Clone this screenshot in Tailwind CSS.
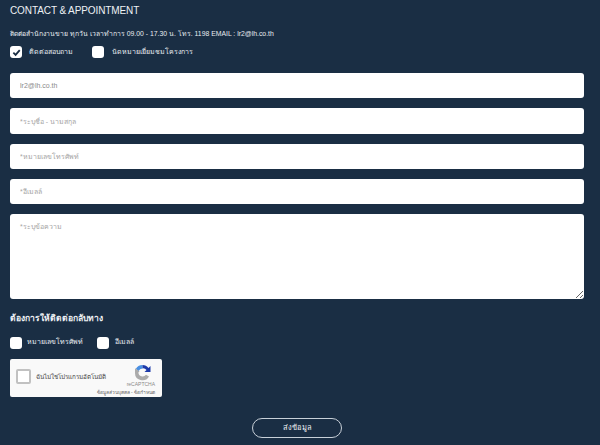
<!DOCTYPE html>
<html lang="th">
<head>
    <meta charset="UTF-8">
    <meta name="viewport" content="width=device-width, initial-scale=1.0">
    <title>Contact &amp; Appointment</title>
    <script src="https://cdn.jsdelivr.net/npm/@tailwindcss/browser@4"></script>
</head>
<body class="bg-[#1a2e44] text-white h-[445px] overflow-hidden font-['Liberation_Sans','Noto_Sans',sans-serif]">
    <form class="w-[574px] ml-[10px] flex flex-col">
        <h1 class="mt-[3px] h-[15px] leading-[15px] text-[10px] tracking-[-0.1px] text-[#eef1f4]">CONTACT &amp; APPOINTMENT</h1>

        <p class="mt-[10px] h-[12px] leading-[12px] text-[6.85px] text-[#e8ecf0]">ติดต่อสำนักงานขาย ทุกวัน เวลาทำการ 09.00 - 17.30 น. โทร. 1198 EMAIL : lr2@lh.co.th</p>

        <!-- ประเภทการติดต่อ -->
        <div class="mt-[6px] flex items-center h-[12px] text-[7px] text-[#e8ecf0]">
            <span class="w-[12px] h-[12px] bg-white rounded-[3px] flex items-center justify-center">
                <svg class="w-[9px] h-[9px]" viewBox="0 0 10 10" fill="none" stroke="#1a2e44" stroke-width="2"><path d="M1.5 5.2 L4 7.6 L8.6 2.4"/></svg>
            </span>
            <span class="ml-[7px]">ติดต่อสอบถาม</span>
            <span class="ml-[19px] w-[12px] h-[12px] bg-white rounded-[3px]"></span>
            <span class="ml-[8px]">นัดหมายเยี่ยมชมโครงการ</span>
        </div>

        <div class="mt-[15px] flex flex-col gap-[10px]">
            <input type="text" value="lr2@lh.co.th" class="w-full h-[25px] px-[10px] bg-white rounded-[3px] text-[7px] text-[#8a8a8a] outline-none">
            <input type="text" placeholder="*ระบุชื่อ - นามสกุล" class="w-full h-[26px] px-[10px] bg-white rounded-[3px] text-[7px] placeholder:text-[#a5a5a5] outline-none">
            <input type="text" placeholder="*หมายเลขโทรศัพท์" class="w-full h-[25px] px-[10px] bg-white rounded-[3px] text-[7px] placeholder:text-[#a5a5a5] outline-none">
            <input type="text" placeholder="*อีเมลล์" class="w-full h-[25px] px-[10px] bg-white rounded-[3px] text-[7px] placeholder:text-[#a5a5a5] outline-none">
            <textarea placeholder="*ระบุข้อความ" class="block w-full h-[85px] px-[10px] py-[8px] bg-white rounded-[3px] text-[7px] placeholder:text-[#a5a5a5] outline-none"></textarea>
        </div>

        <h2 class="mt-[12px] h-[14px] leading-[14px] text-[8.5px] font-bold text-[#eef1f4]">ต้องการให้ติดต่อกลับทาง</h2>

        <!-- ช่องทางติดต่อกลับ -->
        <div class="mt-[11px] flex items-center h-[13px] text-[7px] text-[#e8ecf0]">
            <span class="w-[12px] h-[12px] bg-white rounded-[3px]"></span>
            <span class="ml-[5px]">หมายเลขโทรศัพท์</span>
            <span class="ml-[14px] w-[12px] h-[12px] bg-white rounded-[3px]"></span>
            <span class="ml-[6px]">อีเมลล์</span>
        </div>

        <!-- reCAPTCHA -->
        <div class="mt-[10px] w-[152px] h-[38px] bg-[#f9f9f9] rounded-[2px] flex relative text-[#444]">
            <span class="ml-[6px] mt-[10px] w-[15px] h-[15px] bg-white border-2 border-[#c1c1c1] rounded-[2px]"></span>
            <span class="ml-[5px] mt-[13px] h-[10px] leading-[10px] text-[6.3px] font-medium">ฉันไม่ใช่โปรแกรมอัตโนมัติ</span>
            <svg class="absolute left-[124px] top-[5px] w-[17px] h-[17px]" viewBox="0 0 17 17" fill="none">
                <path d="M8.5 1 A7.5 7.5 0 0 0 1.8 5 L4.6 7 A4.2 4.2 0 0 1 8.5 4.4 Z" fill="#4a90e2"/>
                <path d="M8.5 1 A7.5 7.5 0 0 1 14.5 4 L16.5 2 V8 H10.5 L12.5 6 A4.2 4.2 0 0 0 8.5 4.4 Z" fill="#1c3aa9"/>
                <path d="M1 8.5 A7.5 7.5 0 0 0 15 12.5 L12 10.8 A4.2 4.2 0 0 1 4.4 8.5 L5.5 7.2 L1 4.2 Z" fill="#ababab"/>
            </svg>
            <span class="absolute right-[7px] top-[22px] h-[7px] leading-[7px] text-[5px] text-[#8a8a8a]">reCAPTCHA</span>
            <span class="absolute right-[7px] top-[30px] h-[6px] leading-[6px] text-[5px] text-[#6a6a6a]">ข้อมูลส่วนบุคคล - ข้อกำหนด</span>
        </div>

        <button type="button" class="mt-[21px] ml-[242px] w-[90px] h-[20px] border border-[#c8d0d8] rounded-full text-[7.5px] text-[#eef1f4]">ส่งข้อมูล</button>
    </form>
</body>
</html>
